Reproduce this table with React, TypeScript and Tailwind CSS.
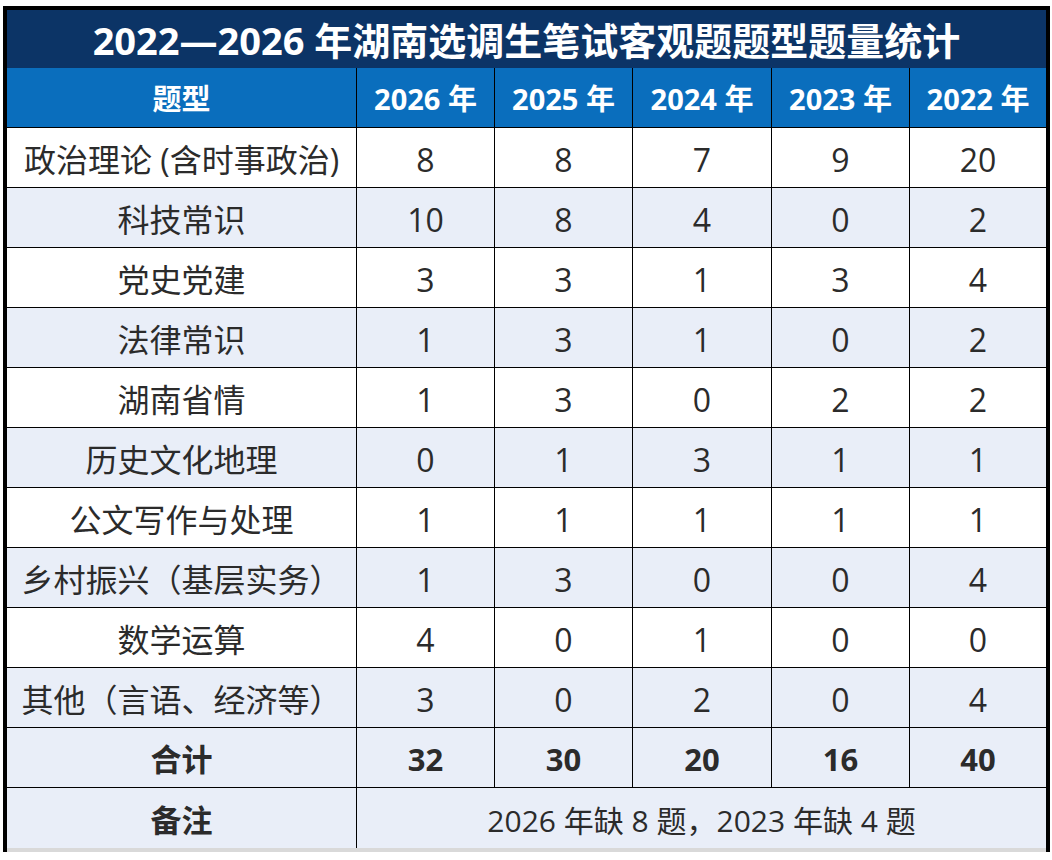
import React from "react";

const rows: [string, number[]][] = [
  ["政治理论 (含时事政治)", [8, 8, 7, 9, 20]],
  ["科技常识", [10, 8, 4, 0, 2]],
  ["党史党建", [3, 3, 1, 3, 4]],
  ["法律常识", [1, 3, 1, 0, 2]],
  ["湖南省情", [1, 3, 0, 2, 2]],
  ["历史文化地理", [0, 1, 3, 1, 1]],
  ["公文写作与处理", [1, 1, 1, 1, 1]],
  ["乡村振兴（基层实务）", [1, 3, 0, 0, 4]],
  ["数学运算", [4, 0, 1, 0, 0]],
  ["其他（言语、经济等）", [3, 0, 2, 0, 4]],
];

const years = ["2026 年", "2025 年", "2024 年", "2023 年", "2022 年"];
const totals = [32, 30, 20, 16, 40];

const grid = "grid grid-cols-[350px_138px_138px_139px_138px_136px]";

export default function App() {
  return (
    <div
      className="bg-white w-[1052px] h-[860px] pl-[3px] pt-[6px]"
      style={{ fontFamily: '"Open Sans", "Noto Sans CJK SC", sans-serif' }}
    >
      <div className="w-[1047px] border-l-4 border-t-4 border-r-4 border-black">
        <div className="h-[58px] bg-[#0c3466] flex items-center justify-center text-white font-bold text-[38px] leading-none pt-[2px]">
          2022—2026 年湖南选调生笔试客观题题型题量统计
        </div>
        <div className={`${grid} h-[60px] bg-[#0a6ebd] border-b border-black text-white font-bold text-[29px]`}>
          <div className="flex items-center justify-center border-r border-black pt-[2px]">题型</div>
          {years.map((y, i) => (
            <div
              key={y}
              className={`flex items-center justify-center pt-[2px] ${i < 4 ? "border-r border-black" : ""}`}
            >
              {y}
            </div>
          ))}
        </div>
        {rows.map(([name, vals], r) => (
          <div
            key={name}
            className={`${grid} h-[60px] border-b border-black text-[#2b2b2b] text-[32px] ${
              r % 2 === 1 ? "bg-[#e9eef8]" : "bg-white"
            }`}
          >
            <div className="flex items-center justify-center border-r border-black whitespace-nowrap pt-[4px]">
              {name}
            </div>
            {vals.map((v, i) => (
              <div
                key={i}
                className={`flex items-center justify-center pt-[4px] ${i < 4 ? "border-r border-black" : ""}`}
              >
                {v}
              </div>
            ))}
          </div>
        ))}
        <div className={`${grid} h-[60px] border-b border-black text-[#2b2b2b] text-[31px] font-bold bg-[#e9eef8]`}>
          <div className="flex items-center justify-center border-r border-black pt-[4px]">合计</div>
          {totals.map((v, i) => (
            <div
              key={i}
              className={`flex items-center justify-center pt-[4px] ${i < 4 ? "border-r border-black" : ""}`}
            >
              {v}
            </div>
          ))}
        </div>
        <div className="grid grid-cols-[350px_689px] h-[60px] text-[#2b2b2b] bg-[#e9eef8]">
          <div className="flex items-center justify-center border-r border-black text-[31px] font-bold pt-[4px]">
            备注
          </div>
          <div className="flex items-center justify-center text-[30px] pt-[4px]">
            2026 年缺 8 题，2023 年缺 4 题
          </div>
        </div>
        <div className="h-[4px] bg-[#d9d9d9]" />
      </div>
    </div>
  );
}
